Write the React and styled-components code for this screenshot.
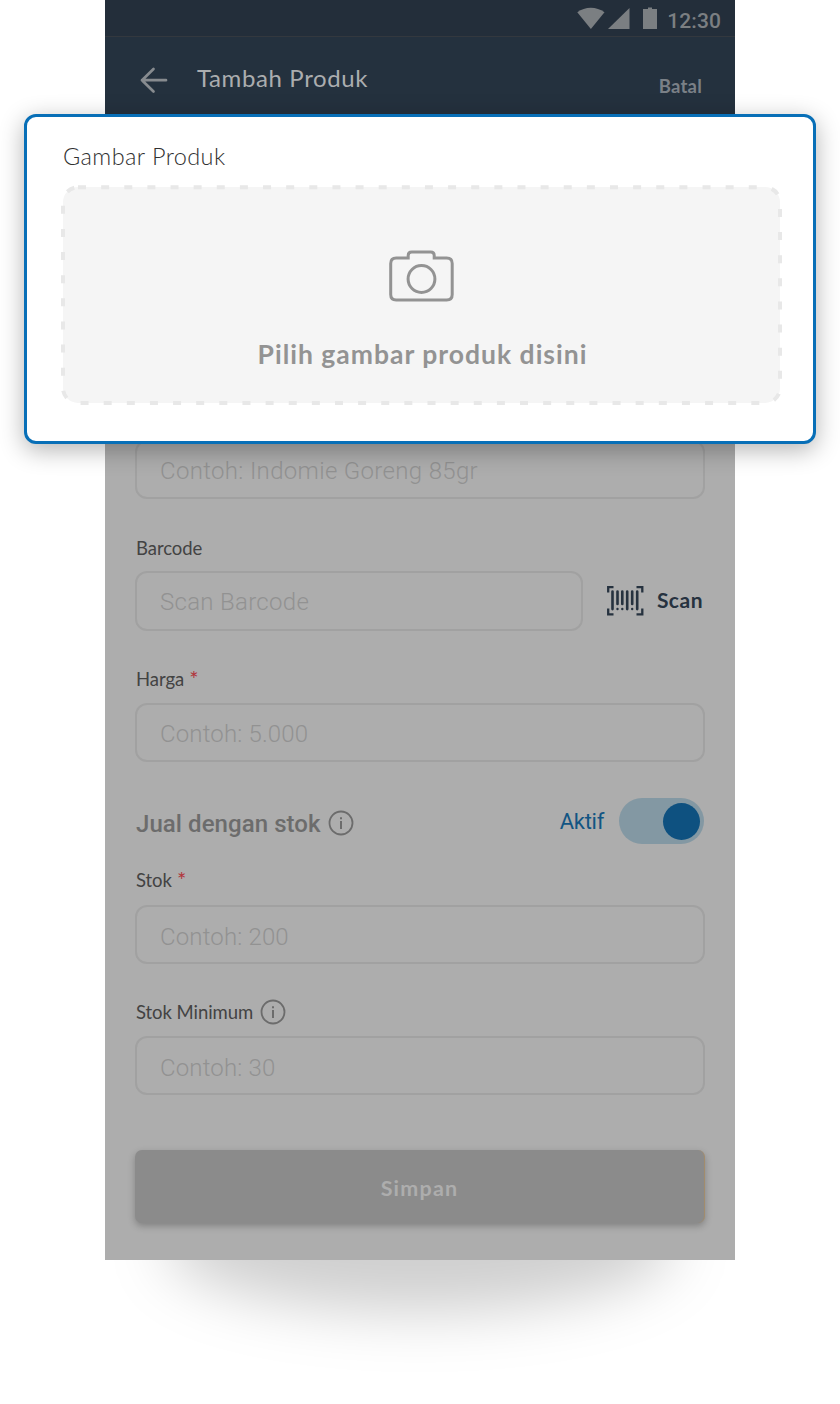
import React from "react";
import styled, { createGlobalStyle } from "styled-components";

const GlobalStyle = createGlobalStyle`
  * { box-sizing: border-box; }
  html, body { margin: 0; background: #fff; }
  body { width: 840px; height: 1404px; overflow: hidden; font-family: Lato, "Liberation Sans", sans-serif; }
`;

const Stage = styled.main`
  position: relative;
  width: 840px;
  height: 1404px;
  padding: 0 105px;
  overflow: hidden;
  isolation: isolate;
`;

const FloorShadow = styled.div`
  position: absolute;
  z-index: -1;
  left: 165px;
  top: 1174px;
  width: 510px;
  height: 138px;
  border-radius: 50%;
  background: rgba(0, 0, 0, 0.19);
  filter: blur(29px);
`;

const Phone = styled.section`
  display: flex;
  flex-direction: column;
  width: 630px;
  height: 1260px;
  background: #adadad;
`;

const StatusBar = styled.div`
  display: flex;
  justify-content: flex-end;
  height: 37px;
  padding: 7px 14px 0 0;
  background: #232e3a;
  border-bottom: 1px solid #33383e;
`;

const Clock = styled.span`
  margin-left: 10px;
  font: 500 21px/28px Roboto, sans-serif;
  letter-spacing: 0.1px;
  color: #7b7f82;
`;

const Header = styled.header`
  display: flex;
  height: 89px;
  padding: 27px 33px 0 35px;
  background: #24313e;
`;

const Title = styled.h1`
  flex: 1;
  margin: -1px 0 0 29px;
  font-size: 24px;
  line-height: 30px;
  font-weight: 400;
  letter-spacing: 0.62px;
  color: #abadaf;
`;

const Cancel = styled.span`
  padding-top: 7px;
  font-size: 18.5px;
  line-height: 30px;
  font-weight: 700;
  letter-spacing: 0.2px;
  color: #7a8087;
`;

const Form = styled.form`
  display: flex;
  flex-direction: column;
  padding: 314px 30px 0;
`;

const Row = styled.div`
  display: flex;
  align-items: center;
  justify-content: space-between;
`;

const Field = styled.div`
  display: flex;
  align-items: center;
  width: ${(p) => p.$width || 570}px;
  height: ${(p) => p.$height || 59}px;
  padding: ${(p) => p.$drop || 2}px 0 0 23px;
  border: 2px solid #a1a1a1;
  border-radius: 12px;
  font: 300 24px/30px Roboto, sans-serif;
  letter-spacing: ${(p) => p.$tracking || 0.15}px;
  color: #929292;
  white-space: nowrap;
`;

const Label = styled.label`
  display: flex;
  align-items: center;
  height: 24px;
  margin: ${(p) => p.$top}px 0 ${(p) => p.$bottom || 12}px 1px;
  font-size: 18.5px;
  line-height: 24px;
  color: #434343;
  letter-spacing: -0.05px;
  svg { margin-left: 7px; }
`;

const Required = styled.span`
  margin-left: 5px;
  font-size: 22px;
  color: #b2343b;
`;

const ScanAction = styled.div`
  display: flex;
  align-items: center;
  gap: 13px;
  padding: 0 2px 1px 0;
  font-size: 21px;
  line-height: 26px;
  font-weight: 700;
  letter-spacing: 0.5px;
  color: #26323f;
`;

const ScanText = styled.span`
  padding-bottom: 1px;
`;

const StockRow = styled(Row)`
  height: 46px;
  margin-top: 36px;
`;

const StockTitle = styled.div`
  display: flex;
  align-items: center;
  padding: 5px 0 0 1px;
  font: 500 24px/30px Roboto, sans-serif;
  letter-spacing: 0.07px;
  color: #6c6c6c;
  svg { margin: -2px 0 0 7px; }
`;

const SwitchGroup = styled.div`
  display: flex;
  align-items: center;
  gap: 15px;
  padding-right: 1px;
  color: #125583;
`;

const SwitchState = styled.span`
  padding-top: 2px;
  font: 400 22px/28px Roboto, sans-serif;
  letter-spacing: -0.3px;
`;

const Switch = styled.div`
  display: flex;
  align-items: center;
  justify-content: flex-end;
  width: 85px;
  height: 46px;
  padding-right: 4px;
  border-radius: 23px;
  background: #8398a3;
`;

const Knob = styled.div`
  width: 37px;
  height: 37px;
  border-radius: 50%;
  background: #0e5180;
`;

const Save = styled.div`
  height: 73px;
  margin-top: 55px;
  padding-top: 23px;
  border-radius: 7px;
  background: #8b8b8b;
  border-right: 1px solid #a28c6c;
  box-shadow: 0 3px 7px rgba(0, 0, 0, 0.25);
  text-align: center;
  font-size: 21.5px;
  line-height: 30px;
  font-weight: 700;
  letter-spacing: 1.2px;
  color: #adadad;
`;

const Spotlight = styled.section`
  position: absolute;
  left: 24px;
  top: 114px;
  width: 792px;
  height: 330px;
  padding: 24px 32px 0 36px;
  border: 3px solid #086fb7;
  border-radius: 12px;
  background: #fff;
  box-shadow: 0 6px 24px rgba(0, 0, 0, 0.3);
`;

const SpotlightTitle = styled.h2`
  margin: 0;
  font-size: 23.5px;
  line-height: 30px;
  font-weight: 300;
  letter-spacing: 0.42px;
  color: #303030;
`;

const DropZone = styled.div`
  position: relative;
  display: flex;
  flex-direction: column;
  align-items: center;
  width: 717px;
  height: 216px;
  margin-top: 16px;
  padding-top: 63px;
  border-radius: 15px;
  background: #f5f5f5;
`;

const DashOutline = styled.svg`
  position: absolute;
  left: -3px;
  top: -3px;
`;

const DropText = styled.div`
  margin: 36px 0 0 2px;
  font-size: 26.5px;
  line-height: 33px;
  font-weight: 700;
  letter-spacing: 1px;
  color: #939393;
  white-space: nowrap;
`;

const Info = () => (
  <svg width="26" height="26" viewBox="0 0 26 26" fill="none" stroke="#6c6c6c" strokeWidth="1.8">
    <circle cx="13" cy="13" r="11.5" />
    <path d="M13 11v8M13 7.2v2" strokeWidth="2" />
  </svg>
);

const StatusIcons = () => (
  <svg width="80" height="24" viewBox="0 0 80 24" fill="#7b7f82">
    <path d="M0.300 5.300C8-0.800 19.500-0.800 27.500 5.300L13.900 22Z" />
    <path d="M31 22 52.500 1v21Z" />
    <path d="M66 2h5V0.500h4v1.500h5v20H66Z" />
  </svg>
);

const BackArrow = () => (
  <svg width="28" height="32" viewBox="0 0 28 32" fill="none" stroke="#878b8f" strokeWidth="2.700" strokeLinecap="round" strokeLinejoin="round">
    <path d="M13.500 5 2 16.200 13.500 27.500M2 16.200h24" />
  </svg>
);

const BarcodeIcon = () => (
  <svg width="37" height="30" viewBox="0.5 0.5 37 30" fill="none" stroke="#26323f" strokeWidth="2">
    <path d="M1.700 7V1.700H7M30 1.700h5.800V7M1.700 23v5.800H7M30 28.800h5.800V23" strokeWidth="2.300" />
    <path d="M6 6v17.600M20.700 6v17.600M30.700 6v17.600M11 6v12.500M15.800 6v12.500M25.700 6v12.500" strokeWidth="2.600" strokeLinecap="round" />
    <path d="M11 23.500v.1M15.800 23.500v.1M25.700 23.500v.1" strokeWidth="2.400" strokeLinecap="round" />
  </svg>
);

const Camera = () => (
  <svg width="67" height="52" viewBox="-0.7 0 67 52" fill="none" stroke="#939393" strokeWidth="3">
    <path d="M7.500 8H19.500V5.500Q19.500 2 23 2H42Q45.500 2 45.500 5.500V8H58Q63.500 8 63.500 13.500V44.500Q63.500 50 58 50H7.500Q2 50 2 44.500V13.500Q2 8 7.500 8Z" />
    <circle cx="32.800" cy="29" r="13.400" />
  </svg>
);

export default function App() {
  return (
    <>
      <GlobalStyle />
      <Stage>
        <FloorShadow />
        <Phone>
          <StatusBar>
            <StatusIcons />
            <Clock>12:30</Clock>
          </StatusBar>
          <Header>
            <BackArrow />
            <Title>Tambah Produk</Title>
            <Cancel>Batal</Cancel>
          </Header>
          <Form>
            <Field $tracking={0.33}>Contoh: Indomie Goreng 85gr</Field>
            <Label $top={37} $bottom={11}>Barcode</Label>
            <Row>
              <Field $width={448} $height={60} $tracking={0.3}>Scan Barcode</Field>
              <ScanAction><BarcodeIcon /><ScanText>Scan</ScanText></ScanAction>
            </Row>
            <Label $top={36}>Harga <Required>*</Required></Label>
            <Field>Contoh: 5.000</Field>
            <StockRow>
              <StockTitle>Jual dengan stok<Info /></StockTitle>
              <SwitchGroup><SwitchState>Aktif</SwitchState><Switch><Knob /></Switch></SwitchGroup>
            </StockRow>
            <Label $top={24} $bottom={13}>Stok <Required>*</Required></Label>
            <Field $drop={4}>Contoh: 200</Field>
            <Label $top={36}>Stok Minimum<Info /></Label>
            <Field $drop={4}>Contoh: 30</Field>
            <Save>Simpan</Save>
          </Form>
        </Phone>
        <Spotlight>
          <SpotlightTitle>Gambar Produk</SpotlightTitle>
          <DropZone>
            <DashOutline width="723" height="223" viewBox="0 0 723 223" fill="none">
              <rect x="3" y="3.300" width="717" height="215.700" rx="15" stroke="#e8e8e8" strokeWidth="4" strokeDasharray="8 15.130" />
            </DashOutline>
            <Camera />
            <DropText>Pilih gambar produk disini</DropText>
          </DropZone>
        </Spotlight>
      </Stage>
    </>
  );
}
